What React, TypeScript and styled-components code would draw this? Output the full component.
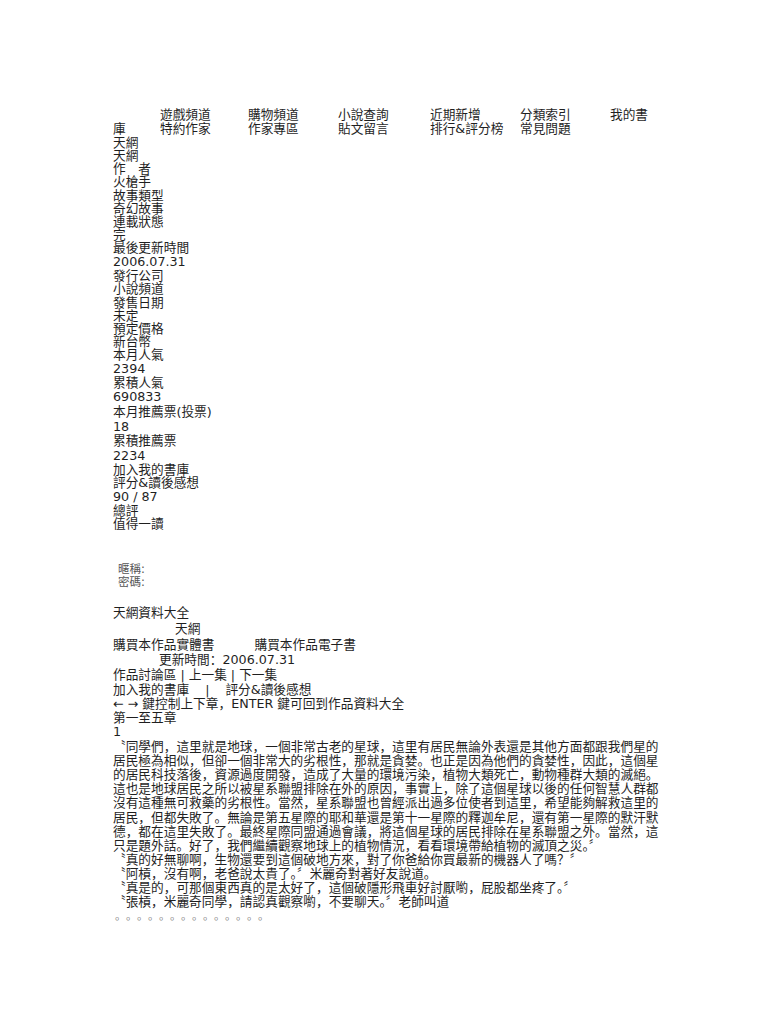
import React from "react";
import styled, { createGlobalStyle } from "styled-components";

const Global = createGlobalStyle`
  html, body { margin: 0; padding: 0; background: #ffffff; }
  body {
    font-family: "DejaVu Sans", "Noto Sans CJK SC", "Noto Sans CJK TC", sans-serif;
    font-size: 12.7px;
    color: #1f1f1f;
  }
`;

const Page = styled.div`
  padding: 108px 0 40px 113px;
  width: 540px;
`;

const Nav = styled.nav`
  display: grid;
  grid-template-columns: 47px 88px 90px 92px 90px 90px auto;
  grid-auto-rows: 14px;
  line-height: 14px;
  white-space: nowrap;
`;

const NavCell = styled.span`
  color: #1f1f1f;
`;

const Info = styled.div`
  display: flex;
  flex-direction: column;
`;

const InfoLine = styled.div<{ $tall?: boolean }>`
  line-height: ${(p) => (p.$tall ? "15px" : "13.15px")};
  height: ${(p) => (p.$tall ? "15px" : "13.15px")};
  white-space: nowrap;
`;

const Login = styled.div`
  margin-top: 33px;
  padding-left: 5px;
  font-size: 11.5px;
  line-height: 13px;
  color: #555;
`;

const Block = styled.div`
  margin-top: 17px;
`;

const Line = styled.div<{ $h: number; $indent?: number }>`
  line-height: ${(p) => p.$h}px;
  height: ${(p) => p.$h}px;
  padding-left: ${(p) => p.$indent ?? 0}px;
  white-space: nowrap;
`;

const Gap = styled.span<{ $w: number }>`
  display: inline-block;
  width: ${(p) => p.$w}px;
`;

const Para = styled.div`
  margin-top: 2px;
  width: 536px;
`;

const ParaLine = styled.div<{ $last?: boolean }>`
  line-height: 14.1px;
  height: 14.1px;
  white-space: nowrap;
  text-align: justify;
  text-align-last: ${(p) => (p.$last ? "left" : "justify")};
`;

const Dialogue = styled.div`
  line-height: 14px;
  height: 14px;
  white-space: nowrap;
`;

const Dots = styled.div`
  font-family: "Noto Sans CJK SC", sans-serif;
  line-height: 12px;
  height: 12px;
  font-size: 11px;
  letter-spacing: 5.5px;
  padding-left: 2px;
  color: #888;
  white-space: nowrap;
`;

const navRows: string[][] = [
  ["", "遊戲頻道", "購物頻道", "小說查詢", "近期新增", "分類索引", "我的書"],
  ["庫", "特約作家", "作家專區", "貼文留言", "排行&評分榜", "常見問題"],
];

const info: { t: string; tall?: boolean }[] = [
  { t: "天網" },
  { t: "天網" },
  { t: "作\u3000者" },
  { t: "火槍手" },
  { t: "故事類型" },
  { t: "奇幻故事" },
  { t: "連載狀態" },
  { t: "完" },
  { t: "最後更新時間" },
  { t: "2006.07.31", tall: true },
  { t: "發行公司" },
  { t: "小說頻道" },
  { t: "發售日期" },
  { t: "未定" },
  { t: "預定價格" },
  { t: "新台幣" },
  { t: "本月人氣" },
  { t: "2394", tall: true },
  { t: "累積人氣" },
  { t: "690833", tall: true },
  { t: "本月推薦票(投票)", tall: true },
  { t: "18", tall: true },
  { t: "累積推薦票" },
  { t: "2234", tall: true },
  { t: "加入我的書庫" },
  { t: "評分&讀後感想" },
  { t: "90 / 87", tall: true },
  { t: "總評" },
  { t: "值得一讀" },
];

const para: string[] = [
  "〝同學們，這里就是地球，一個非常古老的星球，這里有居民無論外表還是其他方面都跟我們星的",
  "居民極為相似，但卻一個非常大的劣根性，那就是貪婪。也正是因為他們的貪婪性，因此，這個星",
  "的居民科技落後，資源過度開發，造成了大量的環境污染，植物大類死亡，動物種群大類的滅絕。",
  "這也是地球居民之所以被星系聯盟排除在外的原因，事實上，除了這個星球以後的任何智慧人群都",
  "沒有這種無可救藥的劣根性。當然，星系聯盟也曾經派出過多位使者到這里，希望能夠解救這里的",
  "居民，但都失敗了。無論是第五星際的耶和華還是第十一星際的釋迦牟尼，還有第一星際的默汗默",
  "德，都在這里失敗了。最終星際同盟通過會議，將這個星球的居民排除在星系聯盟之外。當然，這",
  "只是題外話。好了，我們繼續觀察地球上的植物情況，看看環境帶給植物的滅頂之災。〞",
];

const dialogues: string[] = [
  "〝真的好無聊啊，生物還要到這個破地方來，對了你爸給你買最新的機器人了嗎？〞",
  "〝阿槓，沒有啊，老爸說太貴了。〞米麗奇對著好友說道。",
  "〝真是的，可那個東西真的是太好了，這個破隱形飛車好討厭喲，屁股都坐疼了。〞",
  "〝張槓，米麗奇同學，請認真觀察喲，不要聊天。〞老師叫道",
];

export default function App() {
  return (
    <>
      <Global />
      <Page>
        <Nav>
          {navRows.map((row, r) =>
            row.map((c, i) => <NavCell key={`${r}-${i}`}>{c}</NavCell>)
          )}
        </Nav>

        <Info>
          {info.map((it, i) => (
            <InfoLine key={i} $tall={it.tall}>
              {it.t}
            </InfoLine>
          ))}
        </Info>

        <Login>
          <div>暱稱:</div>
          <div>密碼:</div>
        </Login>

        <Block>
          <Line $h={14}>天網資料大全</Line>
          <Line $h={17} $indent={62}>天網</Line>
          <Line $h={15}>
            購買本作品實體書
            <Gap $w={40} />
            購買本作品電子書
          </Line>
          <Line $h={15} $indent={46}>更新時間：2006.07.31</Line>
          <Line $h={15}>作品討論區 | 上一集 | 下一集</Line>
          <Line $h={15}>
            加入我的書庫
            <Gap $w={16} />|<Gap $w={16} />
            評分&amp;讀後感想
          </Line>
          <Line $h={14}>← → 鍵控制上下章，ENTER 鍵可回到作品資料大全</Line>
          <Line $h={14}>第一至五章</Line>
          <Line $h={13}>1</Line>
        </Block>

        <Para>
          {para.map((l, i) => (
            <ParaLine key={i} $last={i === para.length - 1}>
              {l}
            </ParaLine>
          ))}
        </Para>

        {dialogues.map((d, i) => (
          <Dialogue key={i}>{d}</Dialogue>
        ))}

        <Dots>。。。。。。。。。。。。。。</Dots>
      </Page>
    </>
  );
}
